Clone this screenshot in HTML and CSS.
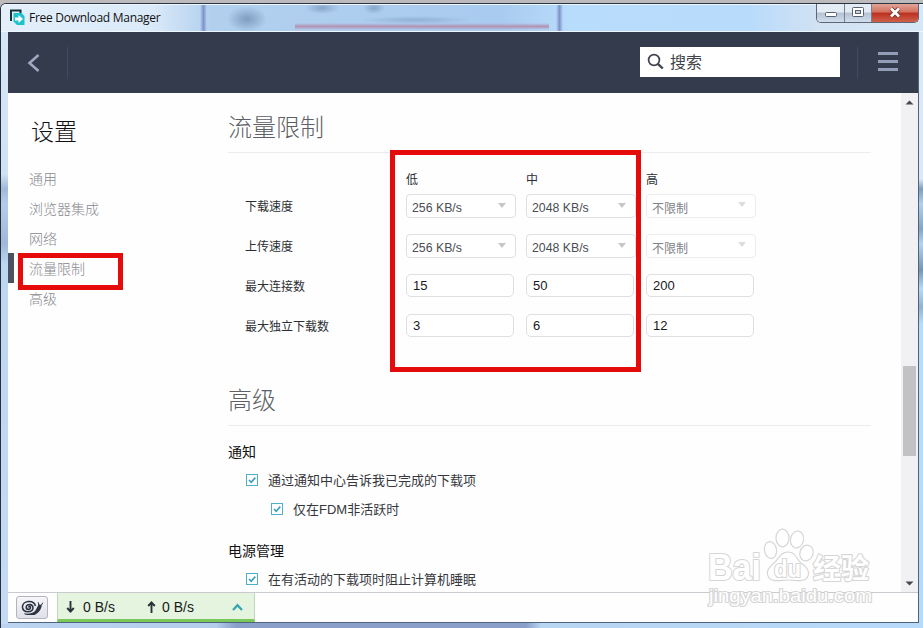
FILE: index.html
```html
<!DOCTYPE html>
<html lang="zh-CN">
<head>
  <meta charset="UTF-8" />
  <title>Free Download Manager</title>
  <link rel="stylesheet" href="styles.css">
</head>
<body>
  <div class="window">
    <div class="titlebar">
      <svg class="logo" width="16" height="17" viewBox="0 0 16 17">
        <path d="M2 12V1.500h9.500v2.500" fill="none" stroke="#12343b" stroke-width="2"/>
        <path d="M4.500 4h8l3 3v9H8l-3.500-3.500z" fill="#1cc3cb"/>
        <path d="M6 8.500h3.500V6l4.500 4-4.500 4v-2.500H6z" fill="#fff"/>
      </svg>
      <span class="title">Free Download Manager</span>
      <div class="controls">
        <span class="ctl min"><svg width="14" height="14" viewBox="0 0 14 14"><rect x="1.500" y="6.500" width="11" height="4" rx="1" fill="#fff" stroke="#59616e"/></svg></span>
        <span class="ctl max"><svg width="14" height="14" viewBox="0 0 14 14"><rect x="1.500" y="1.500" width="11" height="9" rx="1" fill="#fff" stroke="#59616e"/><rect x="4.500" y="4.500" width="5" height="3" fill="#c9d5e4" stroke="#59616e"/></svg></span>
        <span class="ctl close"><svg width="14" height="14" viewBox="0 0 14 14"><path d="M3 2.500l8 8M11 2.500l-8 8" stroke="#6b3530" stroke-width="4.500"/><path d="M3 2.500l8 8M11 2.500l-8 8" stroke="#fff" stroke-width="2.700"/></svg></span>
      </div>
    </div>

    <div class="app">
      <div class="header">
        <div class="back">
          <svg width="14" height="20" viewBox="0 0 14 20"><path d="M12.500 2L3.500 10l9 8" fill="none" stroke="#9fa8c0" stroke-width="2.600"/></svg>
        </div>
        <div class="search">
          <svg width="17" height="17" viewBox="0 0 17 17"><circle cx="7" cy="7" r="5.400" fill="none" stroke="#3f434b" stroke-width="1.700"/><path d="M10.800 10.800l5 4.700" stroke="#3f434b" stroke-width="2.400"/></svg>
          <span>搜索</span>
        </div>
        <div class="menu"><i></i><i></i><i></i></div>
      </div>

      <div class="main">
        <div class="sidebar">
          <h1>设置</h1>
          <ul>
            <li>通用</li>
            <li>浏览器集成</li>
            <li>网络</li>
            <li class="active">流量限制</li>
            <li>高级</li>
          </ul>
        </div>

        <div class="content">
          <h2>流量限制</h2>
          <div class="limits">
            <span></span>
            <span class="col">低</span>
            <span class="col">中</span>
            <span class="col">高</span>

            <span class="label">下载速度</span>
            <div class="select">256 KB/s</div>
            <div class="select">2048 KB/s</div>
            <div class="select disabled">不限制</div>

            <span class="label">上传速度</span>
            <div class="select">256 KB/s</div>
            <div class="select">2048 KB/s</div>
            <div class="select disabled">不限制</div>

            <span class="label">最大连接数</span>
            <div class="input">15</div>
            <div class="input">50</div>
            <div class="input">200</div>

            <span class="label">最大独立下载数</span>
            <div class="input">3</div>
            <div class="input">6</div>
            <div class="input">12</div>
          </div>

          <h2>高级</h2>
          <h3>通知</h3>
          <div class="check">
            <svg width="12" height="12" viewBox="0 0 12 12"><rect x=".5" y=".5" width="11" height="11" fill="#fff" stroke="#4fb0cc"/><path d="M3 6l2.200 2.300L9.300 3.600" fill="none" stroke="#3b9dbd" stroke-width="1.600"/></svg>
            <span>通过通知中心告诉我已完成的下载项</span>
          </div>
          <div class="check sub">
            <svg width="12" height="12" viewBox="0 0 12 12"><rect x=".5" y=".5" width="11" height="11" fill="#fff" stroke="#4fb0cc"/><path d="M3 6l2.200 2.300L9.300 3.600" fill="none" stroke="#3b9dbd" stroke-width="1.600"/></svg>
            <span>仅在FDM非活跃时</span>
          </div>
          <h3 class="power">电源管理</h3>
          <div class="check">
            <svg width="12" height="12" viewBox="0 0 12 12"><rect x=".5" y=".5" width="11" height="11" fill="#fff" stroke="#4fb0cc"/><path d="M3 6l2.200 2.300L9.300 3.600" fill="none" stroke="#3b9dbd" stroke-width="1.600"/></svg>
            <span>在有活动的下载项时阻止计算机睡眠</span>
          </div>
        </div>

        <div class="scrollbar">
          <svg width="9" height="5" viewBox="0 0 9 5"><path d="M.5 4.500L4.500.5l4 4z" fill="#45484d"/></svg>
          <div class="thumb"></div>
          <svg width="9" height="5" viewBox="0 0 9 5"><path d="M.5.5l4 4 4-4z" fill="#45484d"/></svg>
        </div>
      </div>

      <div class="footer">
        <div class="snail">
          <!-- spiral shell, foot, horns -->
          <svg width="24" height="18" viewBox="0 0 24 18">
            <path d="M8.500 8.500c0-1.200 2-1.200 2 .3 0 2.300-4.300 2.200-4.300-.6C6.200 4.600 13 4.600 13 9c0 5-9.800 5.300-10.500-.6C2 1.500 13.500.2 15.500 7" fill="none" stroke="#2b3342" stroke-width="1.600"/>
            <path d="M4 14.200c4 1 8.500.3 11-2.200 1.800-1.800 2-4.500 3.700-6.200 1.600-.7 3.300.5 2.800 2.200-1 3.400-3.500 6.400-7 8H7c-1.500-.2-2.500-.8-3-1.800z" fill="#2b3342"/>
            <path d="M19 7l-.8-3.800M20.800 7l2-3.300" stroke="#2b3342" stroke-width="1"/>
          </svg>
        </div>
        <div class="speed">
          <svg width="9" height="12" viewBox="0 0 9 12"><path d="M4.500 0v10M1.200 7l3.300 3.500L7.800 7" fill="none" stroke="#26333a" stroke-width="1.900"/></svg>
          <span class="down">0 B/s</span>
          <svg width="9" height="12" viewBox="0 0 9 12"><path d="M4.500 12V2M1.200 5l3.300-3.500L7.800 5" fill="none" stroke="#26333a" stroke-width="1.900"/></svg>
          <span class="up">0 B/s</span>
          <svg width="11" height="8" viewBox="0 0 11 8"><path d="M1 7l4.500-4.800L10 7" fill="none" stroke="#35a5b5" stroke-width="2.200"/></svg>
        </div>
      </div>
    </div>
  </div>

  <div class="mark mark-menu"></div>
  <div class="mark mark-table"></div>

  <svg class="watermark" width="180" height="84" viewBox="0 0 180 84">
    <ellipse cx="64.500" cy="25" rx="6" ry="8.500" transform="rotate(-10 64.500 25)"/>
    <ellipse cx="76.500" cy="13" rx="6.500" ry="8.800"/>
    <ellipse cx="91" cy="14.500" rx="6.500" ry="8.500" transform="rotate(12 91 14.500)"/>
    <ellipse cx="100.500" cy="28" rx="6.500" ry="8" transform="rotate(20 100.500 28)"/>
    <path d="M82 27c-8 0-9 7-14 11-6 5-8 9-6 13 3 7 12 4 20 4s17 3 20-4c2-5-1-9-7-13-5-4-5-11-13-11z"/>
    <text class="wm-logo" x="2" y="55" textLength="53" lengthAdjust="spacingAndGlyphs">Bai</text>
    <text class="wm-du" x="68" y="52" textLength="27" lengthAdjust="spacingAndGlyphs">du</text>
    <text class="wm-cjk" x="107" y="54">经验</text>
    <text class="wm-url" x="3" y="77" textLength="163" lengthAdjust="spacingAndGlyphs">jingyan.baidu.com</text>
  </svg>
</body>
</html>
```

FILE: styles.css
```css
* {
  box-sizing: border-box;
}

body {
  margin: 0;
  width: 923px;
  height: 628px;
  overflow: hidden;
  position: relative;
  font-family: "Liberation Sans", "Noto Sans CJK SC", sans-serif;
  background: #bdbabd;
  padding-top: 3px;
}

.window {
  height: 625px;
  padding: 0 4px 5px 7px;
  border-top: 1px solid #2a3442;
  border-left: 1px solid #26303d;
  border-radius: 6px 0 0 0;
  background:
    linear-gradient(#d9e8f8 0, #cfe1f5 170px, #9fb9d8 185px, #b4cdea 200px, #9fb9d8 240px, #bdd6f1 260px, #c5dbf4 100%) 0 0 / 7px 620px no-repeat,
    linear-gradient(#dce8f4 0, #dce9f6 175px, #7f9dbb 185px, #b4d0ea 200px, #86a5c4 225px, #b5d3ef 240px, #7896b4 266px, #b8daf6 285px, #94b2cd 303px, #b8dcfa 320px, #b8dafa 100%) 100% 0 / 4px 620px no-repeat,
    linear-gradient(90deg, #bcd4f0 0, #b4cdec 215px, #8a9fca 235px, #8a9fca 525px, #b8d5f2 540px, #b8dafa 100%);
}

.titlebar {
  display: flex;
  align-items: flex-start;
  height: 28px;
  margin: 0 -4px 0 -7px;
  padding-left: 8px;
  border-top: 1px solid #eef7ff;
  border-bottom: 1px solid #eef6ff;
  border-radius: 5px 0 0 0;
  /* glass bar with the window behind it showing through */
  background:
    linear-gradient(transparent, #b294b4, transparent) 294px 18px / 254px 7px no-repeat,
    linear-gradient(90deg, transparent, #7f93c9, transparent) 199px 0 / 7px 100% no-repeat,
    linear-gradient(90deg, transparent, #7f93c9, transparent) 555px 0 / 7px 100% no-repeat,
    radial-gradient(closest-side, #7e9dc0, transparent) 226px 1px / 40px 26px no-repeat,
    radial-gradient(closest-side, #86a5c8, transparent) 304px -3px / 34px 12px no-repeat,
    radial-gradient(closest-side, #86a5c8, transparent) 362px -3px / 22px 12px no-repeat,
    radial-gradient(closest-side, #92b1d4, transparent) 360px 11px / 110px 8px no-repeat,
    linear-gradient(90deg, #e4effa 0, #dbeaf9 150px, #b2d0ee 210px, #a9cbef 500px, #b8dcfb 570px, #b9dbfb 750px, #d2e2f2 820px, #d7e7f6 100%);
}

.logo {
  margin-top: 4px;
}

.title {
  margin: 4px 0 0 4px;
  font: 12px/18px "Open Sans", "Noto Sans", sans-serif;
  letter-spacing: -0.280px;
  color: #111;
}

.controls {
  display: flex;
  width: 103px;
  height: 19px;
  margin: -1px 4px 0 auto;
  border: 1px solid #5d6672;
  border-top: 0;
  border-radius: 0 0 5px 5px;
  overflow: hidden;
}

.ctl {
  display: flex;
  align-items: center;
  justify-content: center;
  width: 28px;
  background: linear-gradient(#e3ebf4 45%, #b5c2d2 50%, #d0deed);
  border-right: 1px solid #77818e;
}

.ctl.max {
  width: 27px;
}

.ctl.close {
  flex: 1;
  border: 0;
  background: linear-gradient(#e3a598 0, #d3705f 45%, #bb3021 50%, #d0604a);
}

.app {
  height: 591px;
  border: 1px solid #4e647c;
  border-width: 0 1px 1px 0;
  background: #fefefe;
}

.header {
  display: flex;
  align-items: center;
  height: 61px;
  background: #333b4d;
}

.back {
  width: 60px;
  height: 32px;
  padding: 6px 0 0 18px;
  border-right: 1px solid #414a5e;
}

.search {
  display: flex;
  align-items: center;
  width: 200px;
  height: 30px;
  margin: -2px 0 0 auto;
  padding-left: 7px;
  background: #fff;
  font-size: 16px;
  color: #40444c;
}

.search span {
  margin: -2px 0 0 6px;
}

.menu {
  display: flex;
  flex-direction: column;
  gap: 5px;
  width: 61px;
  height: 32px;
  margin-left: 17px;
  padding: 5px 0 0 20px;
  border-left: 1px solid #414a5e;
}

.menu i {
  width: 20px;
  height: 3px;
  background: #949db8;
}

.main {
  display: flex;
  height: 499px;
  overflow: hidden;
}

.sidebar {
  width: 220px;
}

h1, h2, h3, ul {
  margin: 0;
  padding: 0;
  font-weight: 300;
}

h1 {
  padding: 23px 0 0 23px;
  font-size: 23px;
  line-height: 32px;
  color: #111;
}

ul {
  margin-top: 15px;
  list-style: none;
}

li {
  height: 30px;
  padding-left: 21px;
  font-size: 14px;
  line-height: 32px;
  color: #88898e;
}

li.active {
  padding-left: 15px;
  border-left: 6px solid #4a5262;
}

.content {
  width: 643px;
}

h2 {
  height: 60px;
  padding-top: 18px;
  border-bottom: 1px solid #ececf0;
  font-size: 24px;
  line-height: 34px;
  color: #5c5f65;
}

.limits {
  display: grid;
  grid-template-columns: 160px 120px 120px 120px;
  grid-template-rows: 26px repeat(4, 40px);
  align-items: start;
  height: 213px;
  padding: 15px 0 0 18px;
  font-size: 12px;
  color: #2c2e33;
}

.col {
  line-height: 24px;
}

.label {
  margin-left: -1px;
  line-height: 27px;
}

.select, .input {
  border: 1px solid #dfdfe4;
  border-radius: 4px;
  background: #fff;
}

.select {
  display: flex;
  align-items: center;
  justify-content: space-between;
  width: 110px;
  height: 24px;
  padding: 4px 9px 0 5px;
  font-size: 12.300px;
  color: #4b4d52;
}

.select::after {
  content: "";
  margin-top: -5px;
  border: 4px solid transparent;
  border-top: 5px solid #c5c7ca;
  border-bottom: 0;
}

.select.disabled {
  padding-top: 2px;
  border-color: #ececf0;
  color: #808287;
  font-size: 12px;
}

.select.disabled::after {
  border-top-color: #dcdde0;
}

.input {
  width: 108px;
  height: 23px;
  padding-left: 6px;
  border-radius: 5px;
  font-size: 13px;
  line-height: 22px;
  color: #18191c;
}

h3 {
  margin-top: 15px;
  font-size: 14px;
  line-height: 22px;
  font-weight: 400;
  color: #111;
}

.check {
  display: flex;
  align-items: center;
  height: 29px;
  margin: 2px 0 0 18px;
  font-size: 13px;
  color: #36383d;
}

.check span {
  margin-left: 10px;
}

.check.sub {
  margin: 0 0 0 43px;
}

h3.power {
  margin-top: 17px;
}

.scrollbar {
  display: flex;
  flex-direction: column;
  align-items: center;
  width: 17px;
  margin-left: auto;
  padding: 7px 0 6px;
  background: #f1f1f4;
}

.thumb {
  width: 13px;
  height: 90px;
  margin: 261px 0 auto;
  background: #c2c2c4;
}

.footer {
  display: flex;
  height: 30px;
  border-top: 1px solid #c9c9cf;
}

.snail {
  display: flex;
  align-items: center;
  justify-content: center;
  width: 32px;
  height: 23px;
  margin: 3px 9px 0 8px;
  border: 1px solid #b2b4bb;
  border-radius: 3px;
  background: linear-gradient(#f6f6fa, #dfe0e8);
}

.speed {
  display: flex;
  align-items: center;
  width: 198px;
  padding: 2px 0 0 8px;
  border: 1px solid #c3d3bc;
  border-width: 0 1px 3px;
  border-bottom-color: #7bc75a;
  background: #e5f4de;
  font-size: 14px;
  color: #17191c;
}

.down {
  width: 64px;
  margin-left: 8px;
}

.up {
  width: 70px;
  margin-left: 6px;
}

.mark {
  position: absolute;
  border: 5px solid #e60b0b;
}

.mark-menu {
  left: 18px;
  top: 253px;
  width: 105px;
  height: 37px;
}

.mark-table {
  left: 390px;
  top: 150px;
  width: 251px;
  height: 222px;
}

.watermark {
  position: absolute;
  left: 706px;
  top: 525px;
  fill: #fff;
  stroke: #d6d6d6;
  stroke-width: 1.200px;
}

.watermark text {
  paint-order: stroke;
  stroke-width: 2.200px;
  stroke-linejoin: round;
}

.wm-logo {
  font: bold 37px "Liberation Sans", sans-serif;
}

.wm-du {
  font: bold 23px "Liberation Sans", sans-serif;
}

.wm-cjk {
  font: bold 28px "Noto Sans CJK SC", sans-serif;
}

.wm-url {
  font: 18px "Liberation Sans", sans-serif;
}
```
